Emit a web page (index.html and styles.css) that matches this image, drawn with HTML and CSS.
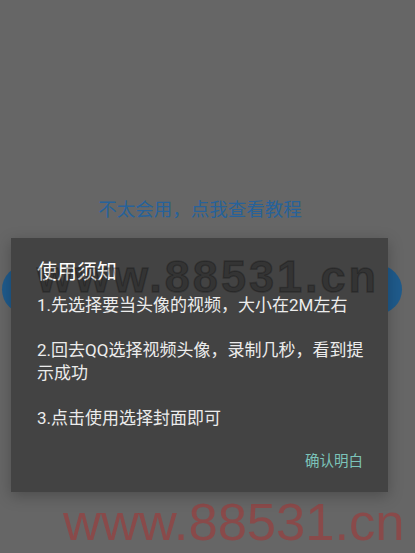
FILE: index.html
```html
<!DOCTYPE html>
<html lang="zh-CN">
<head>
<meta charset="utf-8">
<title>使用须知</title>
<link rel="stylesheet" href="styles.css">
</head>
<body>
<div class="page">
  <div class="link">不太会用，点我查看教程</div>
  <div class="main-btn"></div>
</div>

<div class="dialog">
  <div class="dialog-title">使用须知</div>
  <div class="dialog-body">
    <p>1.先选择要当头像的视频，大小在2M左右</p>
    <p>2.回去QQ选择视频头像，录制几秒，看到提示成功</p>
    <p>3.点击使用选择封面即可</p>
  </div>
  <div class="dialog-actions">
    <span class="dialog-btn">确认明白</span>
  </div>
</div>

<span class="wm wm-dark">www.88531.cn</span>
<span class="wm wm-red">www.88531.cn</span>
</body>
</html>
```

FILE: styles.css
```css
html, body {
  margin: 0;
  padding: 0;
}

body {
  width: 415px;
  height: 553px;
  overflow: hidden;
  background: #666666;
  position: relative;
  font-family: Roboto, "Noto Sans CJK SC", sans-serif;
}

.page {
  display: flex;
  flex-direction: column;
  padding-top: 197px;
}

.link {
  font-size: 18.5px;
  line-height: 26px;
  color: #27629a;
  text-align: center;
  padding-right: 15px;
}

.main-btn {
  margin-top: 42px;
  margin-left: 2px;
  width: 400px;
  height: 49px;
  border-radius: 25px;
  background: #1f5b8c;
}

.dialog {
  position: absolute;
  left: 11px;
  top: 238px;
  width: 377px;
  height: 254px;
  box-sizing: border-box;
  background: #434343;
  box-shadow: 0 4px 14px rgba(0, 0, 0, 0.25);
  display: flex;
  flex-direction: column;
  padding: 20px 13px 0 26px;
}

.dialog-title {
  font-size: 20px;
  line-height: 28px;
  color: #ffffff;
}

.dialog-body {
  margin-top: 8px;
  font-size: 17px;
  line-height: 22.5px;
  color: #ececec;
  display: flex;
  flex-direction: column;
  gap: 22.5px;
}

.dialog-body p {
  margin: 0;
}

.dialog-actions {
  margin-top: 22.5px;
  display: flex;
  justify-content: flex-end;
  padding-right: 12px;
}

.dialog-btn {
  font-size: 14.5px;
  line-height: 20px;
  color: #7cc4ba;
}

.wm {
  position: absolute;
  font-family: "Liberation Sans", Arial, sans-serif;
  white-space: nowrap;
  pointer-events: none;
}

.wm-dark {
  left: 37px;
  top: 254px;
  font-size: 45px;
  line-height: 45px;
  font-weight: 700;
  letter-spacing: 3px;
  color: rgba(0, 0, 0, 0.24);
  -webkit-text-stroke: 1.5px rgba(0, 0, 0, 0.24);
}

.wm-red {
  left: 63px;
  top: 496px;
  font-size: 52.5px;
  line-height: 52.5px;
  font-weight: 400;
  color: rgba(180, 40, 40, 0.45);
}
```
